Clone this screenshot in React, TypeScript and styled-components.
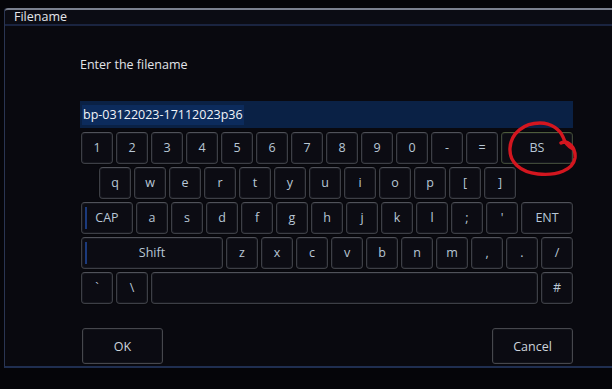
import React from "react";
import styled, { createGlobalStyle } from "styled-components";

const Global = createGlobalStyle`
  html, body { margin: 0; padding: 0; background: #050509; }
  body { font-family: "Open Sans", "Noto Sans", sans-serif; }
`;

const Page = styled.div`
  position: relative;
  width: 612px;
  height: 389px;
  overflow: hidden;
  background: #050509;
  padding-top: 8px;
  box-sizing: border-box;
`;

const Dialog = styled.div`
  margin-left: 4px;
  height: 360px;
  box-sizing: border-box;
  background: #09090f;
  border-left: 1px solid #2a3552;
  border-bottom: 2px solid #1f2e50;
  border-top-left-radius: 3px;
  display: flex;
  flex-direction: column;
`;

const TitleBar = styled.div`
  height: 18px;
  box-sizing: border-box;
  border-top: 2px solid #7a808f;
  border-bottom: 2px solid #1a2440;
  border-top-left-radius: 3px;
  background: #0b0c14;
  padding-left: 9px;
  display: flex;
  align-items: center;
  color: #e4e6ea;
  font-size: 12.5px;
  line-height: 14px;
`;

const Body = styled.div`
  padding: 31px 0 0 75px;
  display: flex;
  flex-direction: column;
  width: 493px;
`;

const Prompt = styled.div`
  color: #e2e4e8;
  font-size: 12.5px;
  line-height: 16px;
  height: 16px;
  margin-bottom: 28px;
`;

const Input = styled.div`
  height: 27px;
  box-sizing: border-box;
  background: #0a2145;
  display: flex;
  align-items: center;
  padding-left: 2px;
  margin-bottom: 4px;
`;

const Selected = styled.span`
  background: #0c2b5c;
  color: #f2f4f8;
  font-size: 12.5px;
  line-height: 20px;
  padding: 0 1px;
`;

const Keyboard = styled.div`
  margin-left: 1px;
  width: 492px;
  display: flex;
  flex-direction: column;
  gap: 3px;
`;

const Row = styled.div<{ $indent?: number }>`
  display: flex;
  gap: 3px;
  padding-left: ${(p) => p.$indent ?? 0}px;
`;

const Key = styled.div<{ $w?: number; $grow?: boolean; $focus?: boolean; $toggle?: boolean }>`
  position: relative;
  box-sizing: border-box;
  height: 32px;
  width: ${(p) => (p.$grow ? "auto" : `${p.$w ?? 32}px`)};
  flex: ${(p) => (p.$grow ? "1 1 0" : "0 0 auto")};
  display: flex;
  align-items: center;
  justify-content: center;
  border: 1px solid ${(p) => (p.$focus ? "#3f4838" : "#3d3f46")};
  border-top-color: ${(p) => (p.$focus ? "#4e5c3c" : "#50525a")};
  border-radius: 4px;
  background: #0c0c13;
  box-shadow: inset 0 0 0 1px #16171e, 0 0 0 1px #07070b;
  color: #b8c7d6;
  font-size: 12.5px;
  line-height: 14px;

  ${(p) =>
    p.$toggle
      ? `&::before {
          content: "";
          position: absolute;
          left: 3px;
          top: 4px;
          bottom: 4px;
          width: 2px;
          background: #1b3a7c;
        }`
      : ""}
`;

const Buttons = styled.div`
  margin-top: 24px;
  margin-left: 2px;
  width: 491px;
  display: flex;
  justify-content: space-between;
`;

const Button = styled.div`
  box-sizing: border-box;
  width: 81px;
  height: 36px;
  border: 1px solid #46474d;
  border-radius: 3px;
  background: #0b0b12;
  box-shadow: inset 0 0 0 1px #121319;
  color: #cdd4dc;
  font-size: 12.5px;
  display: flex;
  align-items: center;
  justify-content: center;
`;

const Annotation = styled.svg`
  position: absolute;
  left: 0;
  top: 0;
  width: 612px;
  height: 389px;
  pointer-events: none;
`;

const row1 = ["1", "2", "3", "4", "5", "6", "7", "8", "9", "0", "-", "="];
const row2 = ["q", "w", "e", "r", "t", "y", "u", "i", "o", "p", "[", "]"];
const row3 = ["a", "s", "d", "f", "g", "h", "j", "k", "l", ";", "'"];
const row4 = ["z", "x", "c", "v", "b", "n", "m", ",", ".", "/"];

export default function App() {
  return (
    <Page>
      <Global />
      <Dialog>
        <TitleBar>Filename</TitleBar>
        <Body>
          <Prompt>Enter the filename</Prompt>
          <Input>
            <Selected>bp-03122023-17112023p36</Selected>
          </Input>
          <Keyboard>
            <Row>
              {row1.map((k) => (
                <Key key={k}>{k}</Key>
              ))}
              <Key $grow $focus>BS</Key>
            </Row>
            <Row $indent={18}>
              {row2.map((k) => (
                <Key key={k}>{k}</Key>
              ))}
            </Row>
            <Row>
              <Key $w={52} $toggle>CAP</Key>
              {row3.map((k) => (
                <Key key={k}>{k}</Key>
              ))}
              <Key $grow>ENT</Key>
            </Row>
            <Row>
              <Key $grow $toggle>Shift</Key>
              {row4.map((k) => (
                <Key key={k}>{k}</Key>
              ))}
            </Row>
            <Row>
              <Key>`</Key>
              <Key>\</Key>
              <Key $grow />
              <Key>#</Key>
            </Row>
          </Keyboard>
          <Buttons>
            <Button>OK</Button>
            <Button>Cancel</Button>
          </Buttons>
        </Body>
      </Dialog>
      <Annotation viewBox="0 0 612 389">
        <path
          d="M 561 143 C 568 139, 576 148, 575 158 C 573 170, 557 176, 538 174 C 520 172, 509 162, 510 148 C 511 133, 524 123, 540 123 C 552 123, 560 130, 563 137 C 565 143, 569 147, 573 149"
          fill="none"
          stroke="#d3161f"
          strokeWidth="3.4"
          strokeLinecap="round"
          strokeLinejoin="round"
        />
      </Annotation>
    </Page>
  );
}
